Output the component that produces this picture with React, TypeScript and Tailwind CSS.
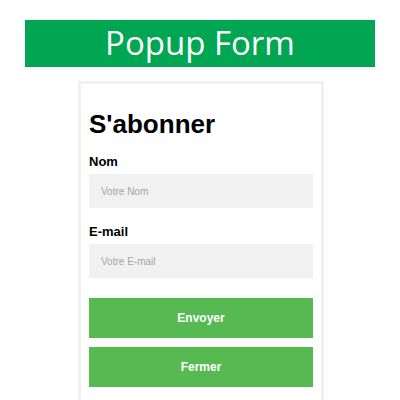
export default function App() {
  return (
    <div className="min-h-screen bg-white font-['Liberation_Sans',Arial,sans-serif] pt-[20px]">
      {/* Title bar */}
      <div className="mx-[25px] h-[47px] bg-[#00a651] flex items-center justify-center">
        <h1 className="font-['Open_Sans',sans-serif] font-normal text-[33px] leading-none text-white pb-[2px]">
          Popup Form
        </h1>
      </div>

      {/* Form card */}
      <div className="ml-[78px] mt-[14px] w-[246px] border-[3px] border-[#f1f1f1] px-[8px] pt-[8px] pb-[20px]">
        <h2 className="mt-[16px] text-[26px] leading-[32px] font-bold text-black">S'abonner</h2>

        <label className="block mt-[14px] text-[13px] leading-[16px] font-bold text-black">Nom</label>
        <input
          type="text"
          placeholder="Votre Nom"
          className="mt-[4px] block w-full h-[34px] bg-[#f1f1f1] px-[12px] text-[10px] text-black placeholder:text-[#a5a5a5] outline-none"
        />

        <label className="block mt-[16px] text-[13px] leading-[16px] font-bold text-black">E-mail</label>
        <input
          type="text"
          placeholder="Votre E-mail"
          className="mt-[4px] block w-full h-[34px] bg-[#f1f1f1] px-[12px] text-[10px] text-black placeholder:text-[#a5a5a5] outline-none"
        />

        <button className="mt-[20px] block w-full h-[40px] bg-[#57b952] text-white text-[12px] font-bold">
          Envoyer
        </button>
        <button className="mt-[9px] block w-full h-[40px] bg-[#57b952] text-white text-[12px] font-bold">
          Fermer
        </button>
      </div>
    </div>
  );
}
